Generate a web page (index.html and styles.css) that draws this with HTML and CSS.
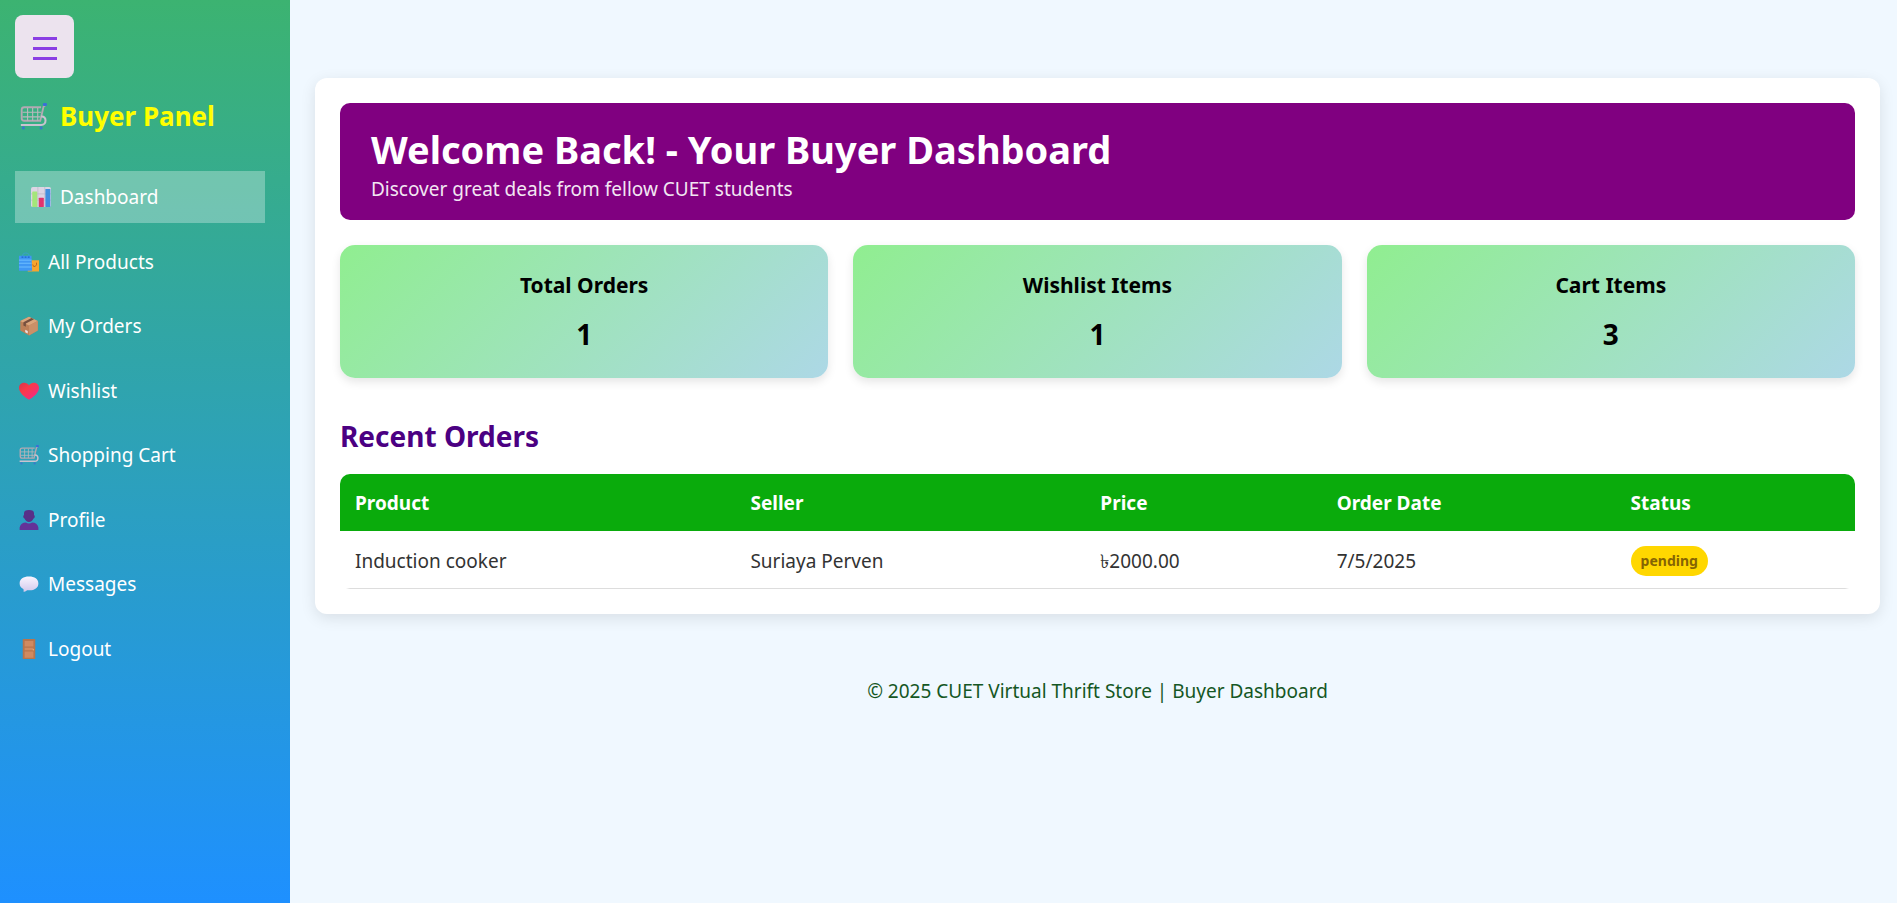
FILE: index.html
```html
<!DOCTYPE html>
<html lang="en">
<head>
<meta charset="utf-8">
<meta name="viewport" content="width=device-width, initial-scale=1">
<title>Buyer Dashboard</title>
<link rel="stylesheet" href="styles.css">
</head>
<body>
<svg class="sprite" aria-hidden="true">
  <symbol id="cart" viewBox="0 0 32 32">
    <path d="M30 3l-2 1-4 17H5c-2 0-3-1-3-3V8c0-2 1-3 3-3h20" fill="none" stroke="#b3a9b3" stroke-width="2.200"/>
    <path d="M3 11h22M3 16.500h21M9 6v15M15 6v15M21 6v15" stroke="#b9b9bd" stroke-width="1.300"/>
    <path d="M25 16c7-1 7 10 0 10H1" fill="none" stroke="#c9c3cf" stroke-width="2.400"/>
    <circle cx="4" cy="29.500" r="1.800" fill="#3b78c9"/><circle cx="25" cy="29.500" r="1.800" fill="#3b78c9"/>
    <rect x="27" y="0" width="5" height="3.500" rx="1.500" fill="#3b6fd6"/>
  </symbol>
  <symbol id="chart" viewBox="0 0 32 32">
    <rect x="0" y="0" width="32" height="32" rx="3" fill="#dcd5e4"/>
    <path d="M0 11h32M0 21h32M11 0v32M22 0v32" stroke="#b9b3c6" stroke-width="1"/>
    <rect x="2" y="7" width="8" height="25" rx="1" fill="#a4e67a"/>
    <rect x="12.500" y="17" width="8" height="15" rx="1" fill="#e0346e"/>
    <rect x="23" y="3" width="8" height="29" rx="1" fill="#3f8fe0"/>
  </symbol>
  <symbol id="bags" viewBox="0 0 32 32">
    <path d="M6 8V4q5-5 10 0v4" fill="none" stroke="#3a9fd0" stroke-width="1.500"/>
    <path d="M15 13h17v18H14z" fill="#f6a52f"/>
    <path d="M22 20q1 5 4 3t2-6" fill="none" stroke="#b9651a" stroke-width="1.500"/>
    <path d="M0 6h20l1 24H0z" fill="#3f97f4"/>
    <path d="M0 13h20M0 18h20M0 24h20" stroke="#6fc0ff" stroke-width="1.500"/>
    <path d="M4 8h3M9 8h3M14 8h3" stroke="#1f65c9" stroke-width="2"/>
  </symbol>
  <symbol id="box" viewBox="0 0 32 32">
    <path d="M16 1l14 7v15l-14 8-14-8V8z" fill="#bd8058"/>
    <path d="M16 1l14 7-14 7L2 8z" fill="#dba67c"/>
    <path d="M16 15v16l14-8V8z" fill="#cb9068"/>
    <path d="M20 3l4 2-13 7v5l-4-2v-5z" fill="#76503f"/>
    <path d="M10 22l4 2v4l-4-2z" fill="#eee3e5"/>
  </symbol>
  <symbol id="heart" viewBox="0 0 32 32">
    <linearGradient id="heartFill" x1="0" y1="0" x2="1" y2="1"><stop offset="0" stop-color="#d6344c"/><stop offset=".35" stop-color="#fa3948"/><stop offset="1" stop-color="#f12693"/></linearGradient>
    <path d="M16 30C10 26 0 19 0 11 0 2 12 0 16 7 20 0 32 2 32 11c0 8-10 15-16 19z" fill="url(#heartFill)"/>
  </symbol>
  <symbol id="person" viewBox="0 0 32 32">
    <path d="M8 5q0-5 8-5t8 5v3q2 1 1 4l-2 2q-2 5-7 5t-7-5l-2-2q-1-3 1-4z" fill="#583088"/>
    <path d="M1 32v-4q2-8 10-8 5 3 10 0 8 0 10 8v4z" fill="#643398"/>
  </symbol>
  <symbol id="speech" viewBox="0 0 32 32">
    <linearGradient id="speechFill" x1="0" y1="0" x2="0" y2="1"><stop offset="0" stop-color="#f9f5ff"/><stop offset="1" stop-color="#d3c9ec"/></linearGradient>
    <path d="M16 4c9 0 15 4 15 11s-6 11-14 11h-4q-3 3-6 2 1-2 0-4-6-3-6-9C1 8 7 4 16 4z" fill="url(#speechFill)"/>
  </symbol>
  <symbol id="door" viewBox="0 0 32 32">
    <rect x="6" y="0" width="20" height="32" rx="1" fill="#b7754d"/>
    <path d="M9 3h14v9H9zM9 14h14v4H9zM9 20h14v10H9z" fill="#d08a60"/>
    <circle cx="23" cy="17" r="1.200" fill="#e6b070"/>
  </symbol>
</svg>
<div class="layout">
  <aside class="sidebar">
    <button class="toggle" type="button" aria-label="Toggle menu">
      <svg class="toggle-icon" viewBox="0 0 24 24"><path d="M0 2.500h24M0 12.500h24M0 22.500h24" stroke="#8a3ee3" stroke-width="3"/></svg>
    </button>
    <h2 class="brand"><svg class="brand-icon"><use href="#cart"/></svg>Buyer Panel</h2>
    <nav>
      <ul class="menu">
        <li class="menu-item"><a class="link active" href="#"><svg class="icon"><use href="#chart"/></svg>Dashboard</a></li>
        <li class="menu-item"><a class="link" href="#"><svg class="icon"><use href="#bags"/></svg>All Products</a></li>
        <li class="menu-item"><a class="link" href="#"><svg class="icon"><use href="#box"/></svg>My Orders</a></li>
        <li class="menu-item"><a class="link" href="#"><svg class="icon"><use href="#heart"/></svg>Wishlist</a></li>
        <li class="menu-item"><a class="link" href="#"><svg class="icon"><use href="#cart"/></svg>Shopping Cart</a></li>
        <li class="menu-item"><a class="link" href="#"><svg class="icon"><use href="#person"/></svg>Profile</a></li>
        <li class="menu-item"><a class="link" href="#"><svg class="icon"><use href="#speech"/></svg>Messages</a></li>
        <li class="menu-item"><a class="link" href="#"><svg class="icon"><use href="#door"/></svg>Logout</a></li>
      </ul>
    </nav>
  </aside>
  <div class="content">
    <main class="panel">
      <header class="banner">
        <h1 class="banner-title">Welcome Back! - Your Buyer Dashboard</h1>
        <p class="banner-text">Discover great deals from fellow CUET students</p>
      </header>
      <section class="stats">
        <div class="stat"><h3 class="stat-label">Total Orders</h3><p class="stat-value">1</p></div>
        <div class="stat"><h3 class="stat-label">Wishlist Items</h3><p class="stat-value">1</p></div>
        <div class="stat"><h3 class="stat-label">Cart Items</h3><p class="stat-value">3</p></div>
      </section>
      <section>
        <h2 class="section-title">Recent Orders</h2>
        <table class="orders">
          <colgroup><col class="col-product"><col class="col-seller"><col class="col-price"><col class="col-date"><col></colgroup>
          <thead><tr><th>Product</th><th>Seller</th><th>Price</th><th>Order Date</th><th>Status</th></tr></thead>
          <tbody><tr><td>Induction cooker</td><td>Suriaya Perven</td><td>৳2000.00</td><td>7/5/2025</td><td><span class="badge">pending</span></td></tr></tbody>
        </table>
      </section>
    </main>
    <footer class="footer">© 2025 CUET Virtual Thrift Store | Buyer Dashboard</footer>
  </div>
</div>
</body>
</html>
```
FILE: styles.css
```css
* {
  box-sizing: border-box;
  margin: 0;
  padding: 0;
}

body {
  background: #f0f8ff;
  color: #333;
  font-family: "Noto Sans", "Open Sans", sans-serif;
  font-size: 19px;
  line-height: 28px;
}

.sprite {
  position: absolute;
  width: 0;
  height: 0;
}

.layout {
  display: flex;
  min-height: 100vh;
}

.sidebar {
  flex: 0 0 290px;
  padding: 15px 25px 15px 15px;
  background: linear-gradient(to bottom, #3cb371, #1e90ff);
}

.toggle {
  display: flex;
  align-items: center;
  justify-content: center;
  width: 59px;
  height: 63px;
  padding-top: 3px;
  border: 0;
  border-radius: 8px;
  background: #ece3ee;
}

.toggle-icon {
  width: 24px;
  height: 24px;
}

.brand {
  display: flex;
  align-items: center;
  gap: 13px;
  margin: 20px 0 36px;
  padding-left: 5px;
  color: #ff0;
  font-size: 26px;
  line-height: 37px;
}

.brand-icon {
  width: 27px;
  height: 27px;
}

.menu {
  list-style: none;
}

.menu-item {
  margin-bottom: 13px;
}

.menu-item:nth-child(even) {
  margin-bottom: 12px;
}

.link {
  display: flex;
  align-items: center;
  gap: 9px;
  padding: 12px 4px;
  color: #fff;
  text-decoration: none;
}

.active {
  padding: 12px 16px;
  background: rgba(255, 255, 255, 0.3);
}

.icon {
  width: 20px;
  height: 20px;
}

.content {
  flex: 1;
  min-width: 0;
  padding: 78px 17px 25px 25px;
}

.panel {
  padding: 25px;
  border-radius: 12px;
  background: #fff;
  box-shadow: 0 4px 15px rgba(0, 0, 0, 0.1);
}

.banner {
  padding: 20px 31px 17px;
  border-radius: 10px;
  background: #800080;
  color: #fff;
}

.banner-title {
  font-size: 38px;
  line-height: 52px;
}

.banner-text {
  opacity: 0.9;
}

.stats {
  display: grid;
  grid-template-columns: repeat(3, 1fr);
  gap: 25px;
  margin: 25px 0 39px;
}

.stat {
  padding: 25px 25px 24px;
  border-radius: 15px;
  background: linear-gradient(135deg, #90ee90, #add8e6);
  box-shadow: 0 4px 10px rgba(0, 0, 0, 0.1);
  color: #000;
  text-align: center;
}

.stat-label {
  margin-bottom: 14px;
  font-size: 21px;
  line-height: 31px;
}

.stat-value {
  font-size: 28px;
  font-weight: 700;
  line-height: 39px;
}

.section-title {
  margin-bottom: 18px;
  color: #4b0082;
  font-size: 28px;
  line-height: 39px;
}

.orders {
  width: 100%;
  border-collapse: separate;
  border-spacing: 0;
  border-radius: 10px;
  overflow: hidden;
  table-layout: fixed;
}

.col-product {
  width: 26.1%;
}

.col-seller {
  width: 23.1%;
}

.col-price {
  width: 15.6%;
}

.col-date {
  width: 19.4%;
}

.orders th {
  padding: 15px 15px 14px;
  background: #0aab0c;
  color: #fff;
  text-align: left;
}

.orders td {
  padding: 14px 15px 12px;
  border-bottom: 1px solid #ddd;
}

.badge {
  display: inline-block;
  padding: 5px 10px;
  border-radius: 15px;
  background: #ffd700;
  color: #856404;
  font-size: 14px;
  font-weight: 700;
  line-height: 20px;
}

.footer {
  padding: 63px 20px 20px;
  color: #155724;
  text-align: center;
}
```
